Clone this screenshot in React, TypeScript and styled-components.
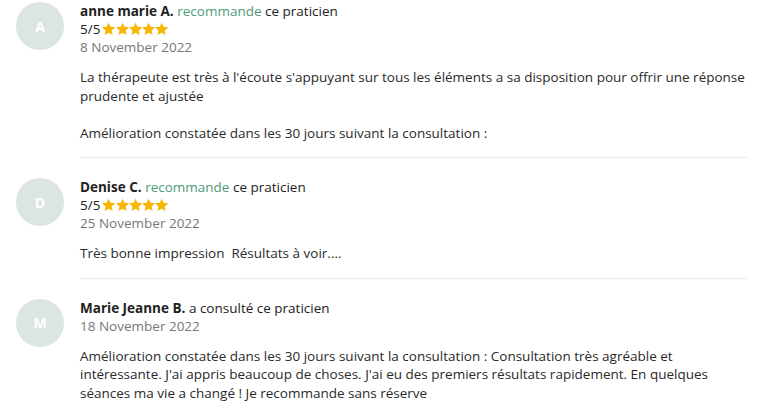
import React from 'react';
import styled, { createGlobalStyle } from 'styled-components';

const GlobalStyle = createGlobalStyle`
  html, body {
    margin: 0;
    padding: 0;
    background: #ffffff;
  }
  body {
    font-family: 'Open Sans', 'Noto Sans', sans-serif;
    -webkit-font-smoothing: antialiased;
  }
`;

type Review = {
  initial: string;
  name: string;
  recommends: boolean;
  rating?: number;
  date: string;
  paragraphs: string[];
};

const reviews: Review[] = [
  {
    initial: 'A',
    name: 'anne marie A.',
    recommends: true,
    rating: 5,
    date: '8 November 2022',
    paragraphs: [
      "La thérapeute est très à l'écoute s'appuyant sur tous les éléments a sa disposition pour offrir une réponse prudente et ajustée",
      'Amélioration constatée dans les 30 jours suivant la consultation :',
    ],
  },
  {
    initial: 'D',
    name: 'Denise C.',
    recommends: true,
    rating: 5,
    date: '25 November 2022',
    paragraphs: ['Très bonne impression\u00a0 Résultats à voir....'],
  },
  {
    initial: 'M',
    name: 'Marie Jeanne B.',
    recommends: false,
    date: '18 November 2022',
    paragraphs: [
      "Amélioration constatée dans les 30 jours suivant la consultation : Consultation très agréable et intéressante. J'ai appris beaucoup de choses. J'ai eu des premiers résultats rapidement. En quelques séances ma vie a changé ! Je recommande sans réserve",
    ],
  },
];

const Page = styled.div`
  padding: 0 18px 0 16px;
  width: 766px;
  box-sizing: border-box;
`;

const ReviewRow = styled.div`
  display: flex;
  gap: 16px;
  padding-top: 20px;

  &:first-child {
    padding-top: 2px;
  }
`;

const Avatar = styled.div`
  flex: 0 0 48px;
  width: 48px;
  height: 48px;
  border-radius: 50%;
  background: #dbe6e1;
  color: #ffffff;
  display: grid;
  place-items: center;
  font-size: 14px;
  font-weight: 700;
`;

const Content = styled.div<{ $last: boolean }>`
  flex: 1;
  min-width: 0;
  padding-bottom: 15px;
  border-bottom: ${(p) => (p.$last ? 'none' : '1px solid #ececec')};
`;

const Header = styled.div`
  font-size: 13.5px;
  line-height: 18px;
  color: #222222;
`;

const Name = styled.span`
  font-weight: 700;
`;

const Recommend = styled.span`
  color: #4f9a76;
`;

const Rating = styled.div`
  display: flex;
  align-items: center;
  font-size: 13.5px;
  line-height: 18px;
  height: 18px;
  color: #222222;
`;

const Stars = styled.span`
  display: inline-flex;
  margin-left: 2px;
  color: #f8b600;
`;

const DateText = styled.div`
  font-size: 13.5px;
  line-height: 18px;
  color: #777777;
`;

const Body = styled.div`
  margin-top: 12px;
  font-size: 13.5px;
  line-height: 18.5px;
  color: #2a2a2a;
`;

const Paragraph = styled.p`
  margin: 0;

  & + & {
    margin-top: 18.5px;
  }
`;

const Star = () => (
  <svg width="13.2" height="14" viewBox="0 0 24 23" fill="currentColor">
    <path d="M12 0l3.5 7.6 8.5.9-6.4 5.7 1.8 8.4L12 18.3 4.6 22.6l1.8-8.4L0 8.5l8.5-.9z" />
  </svg>
);

export default function App() {
  return (
    <Page>
      <GlobalStyle />
      {reviews.map((r, i) => (
        <ReviewRow key={r.name}>
          <Avatar>{r.initial}</Avatar>
          <Content $last={i === reviews.length - 1}>
            <Header>
              <Name>{r.name}</Name>{' '}
              {r.recommends ? (
                <>
                  <Recommend>recommande</Recommend> ce praticien
                </>
              ) : (
                'a consulté ce praticien'
              )}
            </Header>
            {r.rating && (
              <Rating>
                {r.rating}/5
                <Stars>
                  {Array.from({ length: 5 }).map((_, k) => (
                    <Star key={k} />
                  ))}
                </Stars>
              </Rating>
            )}
            <DateText>{r.date}</DateText>
            <Body>
              {r.paragraphs.map((p) => (
                <Paragraph key={p}>{p}</Paragraph>
              ))}
            </Body>
          </Content>
        </ReviewRow>
      ))}
    </Page>
  );
}
